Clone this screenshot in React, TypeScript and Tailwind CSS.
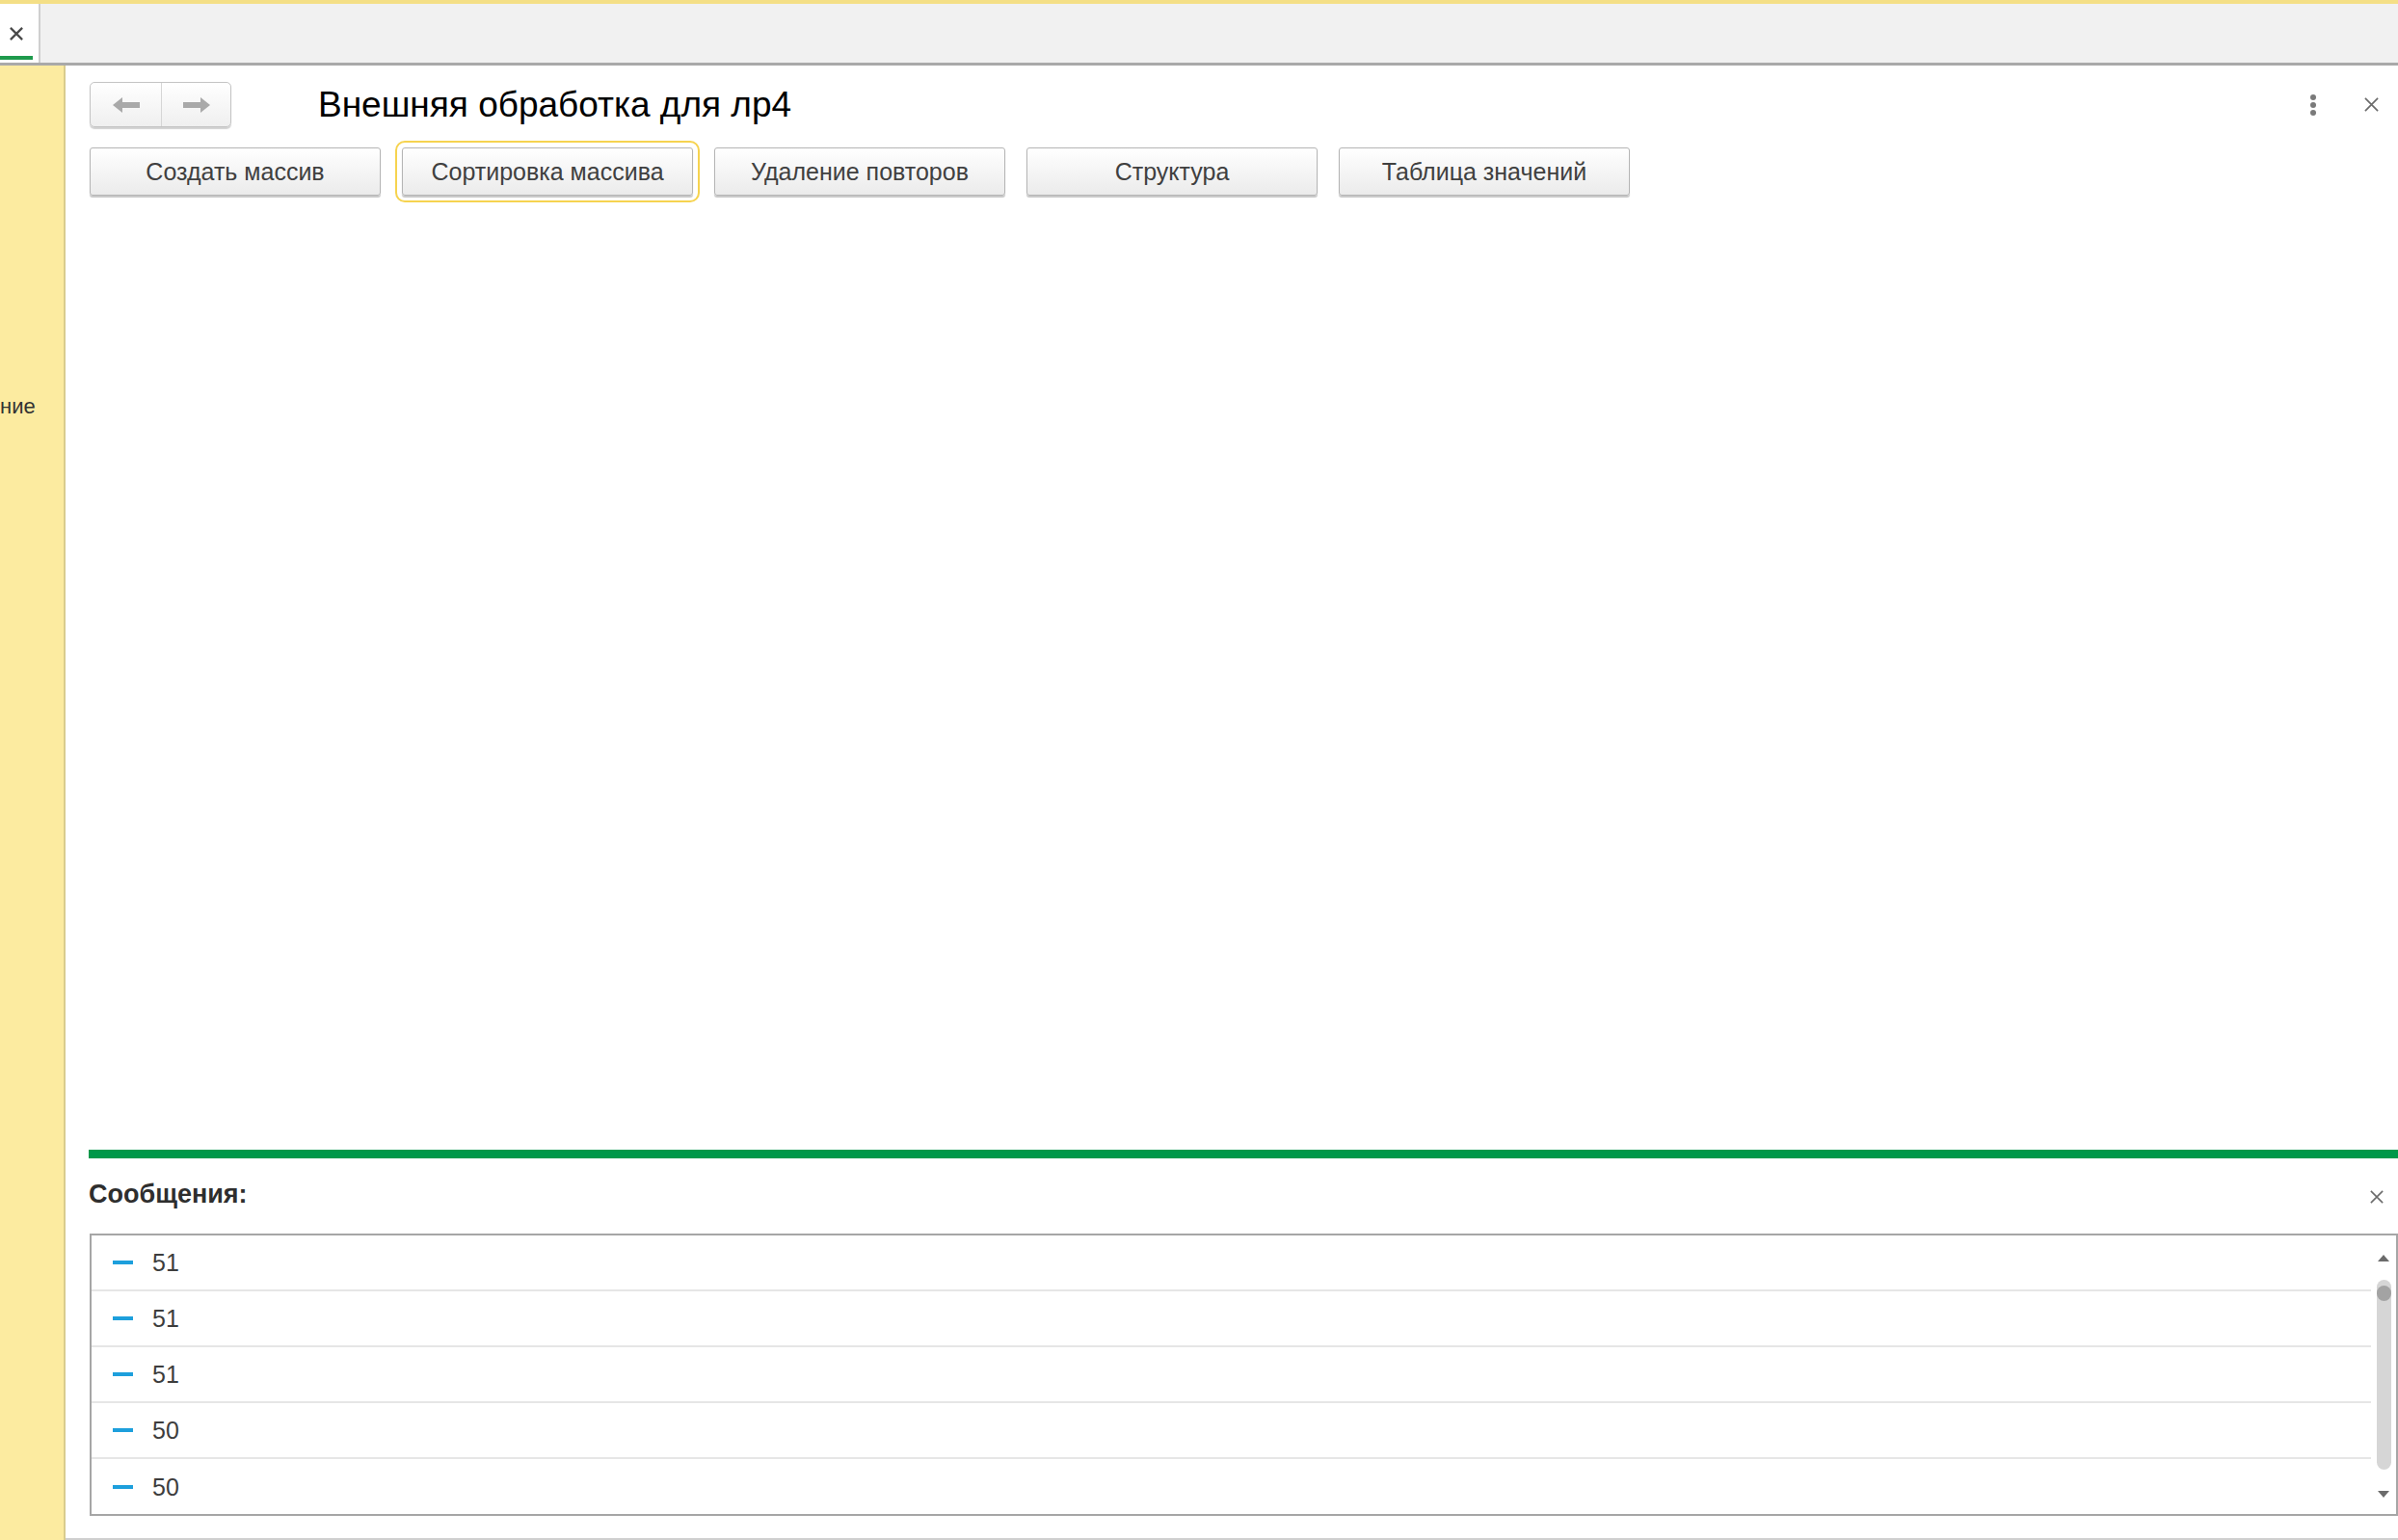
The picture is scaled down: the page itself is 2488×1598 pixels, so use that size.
import React from "react";

const actions = [
  { id: 1, label: "Создать массив", focused: false },
  { id: 2, label: "Сортировка массива", focused: true },
  { id: 3, label: "Удаление повторов", focused: false },
  { id: 4, label: "Структура", focused: false },
  { id: 5, label: "Таблица значений", focused: false },
];

const messages = ["51", "51", "51", "50", "50"];

const ArrowIcon = ({ dir }: { dir: "left" | "right" }) => (
  <svg width="28" height="16" viewBox="0 0 28 16" className={dir === "right" ? "rotate-180" : ""}>
    <polygon points="0,8 10,0 10,5 28,5 28,11 10,11 10,16" fill="#a9a9a9" />
  </svg>
);

const CloseIcon = ({ size, color, width }: { size: number; color: string; width: number }) => (
  <svg width={size} height={size} viewBox="0 0 16 16">
    <path d="M1 1 L15 15 M15 1 L1 15" stroke={color} strokeWidth={width} />
  </svg>
);

const App = () => {
  return (
    <div className="w-[2488px] h-[1598px] flex flex-col overflow-hidden bg-white font-['Liberation_Sans',Arial,sans-serif]">
      {/* Top bar with tab */}
      <div className="h-[68px] flex shrink-0 bg-[#f1f1f1] border-t-4 border-[#f4df86]">
        <div className="w-[42px] flex flex-col bg-white border-r-2 border-[#cfcfcf]">
          <div className="flex justify-center pt-[24px] pr-[6px]">
            <CloseIcon size={14} color="#4a4a4a" width={2.6} />
          </div>
          <div className="mt-[16px] h-[4px] w-[34px] bg-[#1e9a4c]" />
        </div>
        <div className="flex-1" />
      </div>
      <div className="h-[3px] shrink-0 bg-[#a9a9a9] -mt-[3px]" />

      <div className="flex flex-1 min-h-0">
        {/* Left sections panel */}
        <div className="w-[68px] shrink-0 bg-[#fceba0] border-r-2 border-[#d9cc8d]">
          <div className="mt-[340px] text-[22px] leading-[28px] text-[#333] whitespace-nowrap">ние</div>
        </div>

        {/* Main form */}
        <div className="flex-1 flex flex-col pl-[24px] pb-[23px] border-b-2 border-[#cfcfcf]">
          {/* Header */}
          <div className="flex items-center pt-[17px] h-[64px] shrink-0">
            <div className="ml-px flex h-[47px] w-[147px] rounded-[5px] border border-[#c4c4c4] bg-gradient-to-b from-white to-[#efefef] shadow-[0_2px_1px_rgba(0,0,0,0.18)]">
              <div className="w-[74px] flex items-center justify-center border-r border-[#d6d6d6]">
                <ArrowIcon dir="left" />
              </div>
              <div className="flex-1 flex items-center justify-center">
                <ArrowIcon dir="right" />
              </div>
            </div>
            <h1 className="ml-[90px] text-[37px] leading-none text-black">Внешняя обработка для лр4</h1>
            <div className="flex-1" />
            <div className="flex flex-col gap-[2px] mr-[50px]">
              <span className="w-[6px] h-[6px] rounded-full bg-[#7a7a7a]" />
              <span className="w-[6px] h-[6px] rounded-full bg-[#7a7a7a]" />
              <span className="w-[6px] h-[6px] rounded-full bg-[#7a7a7a]" />
            </div>
            <div className="mr-[20px]">
              <CloseIcon size={15} color="#6b6b6b" width={1.8} />
            </div>
          </div>

          {/* Command buttons */}
          <div className="flex gap-[22px] mt-[21px] pl-px shrink-0">
            {actions.map((action) => (
              <button
                key={action.id}
                className={
                  action.focused
                    ? "w-[302px] h-[50px] pt-[2px] rounded-[3px] border border-[#b5b5b5] bg-gradient-to-b from-white to-[#ebebeb] shadow-[0_2px_1px_rgba(0,0,0,0.22)] text-[25px] text-[#404040] outline-2 outline-[#f6d34f] outline-offset-[5px]"
                    : "w-[302px] h-[50px] pt-[2px] rounded-[3px] border border-[#b5b5b5] bg-gradient-to-b from-white to-[#ebebeb] shadow-[0_2px_1px_rgba(0,0,0,0.22)] text-[25px] text-[#404040]"
                }
              >
                {action.label}
              </button>
            ))}
          </div>

          <div className="flex-1" />

          {/* Messages */}
          <div className="h-[9px] bg-[#00984a] shrink-0" />
          <div className="h-[78px] flex items-center justify-between shrink-0 pb-[4px]">
            <span className="text-[27px] font-bold text-[#2e2e2e]">Сообщения:</span>
            <div className="mr-[15px] mt-[6px]">
              <CloseIcon size={14} color="#6b6b6b" width={1.8} />
            </div>
          </div>
          <div className="ml-px h-[293px] flex border-2 border-[#a6a6a6] shrink-0">
            <div className="flex-1 flex flex-col">
              {messages.map((msg, i) => (
                <div
                  key={i}
                  className={
                    i < messages.length - 1
                      ? "h-[58px] flex items-center border-b-2 border-[#e6e6e6]"
                      : "h-[57px] flex items-center"
                  }
                >
                  <span className="ml-[22px] w-[21px] h-[4px] bg-[#1d9fdc]" />
                  <span className="ml-[20px] pt-[2px] text-[25px] text-[#3d3d3d]">{msg}</span>
                </div>
              ))}
            </div>
            <div className="w-[26px] flex flex-col items-center">
              <svg width="12" height="7" viewBox="0 0 12 7" className="mt-[20px]">
                <polygon points="6,0 12,7 0,7" fill="#6b6b6b" />
              </svg>
              <div className="mt-[19px] w-[15px] h-[197px] rounded-full bg-[#d6d6d6] pt-[6px] flex justify-center">
                <span className="w-[15px] h-[16px] rounded-full bg-[#a3a3a3]" />
              </div>
              <svg width="12" height="7" viewBox="0 0 12 7" className="mt-[22px]">
                <polygon points="0,0 12,0 6,7" fill="#6b6b6b" />
              </svg>
            </div>
          </div>
        </div>
      </div>
    </div>
  );
};

export default App;
